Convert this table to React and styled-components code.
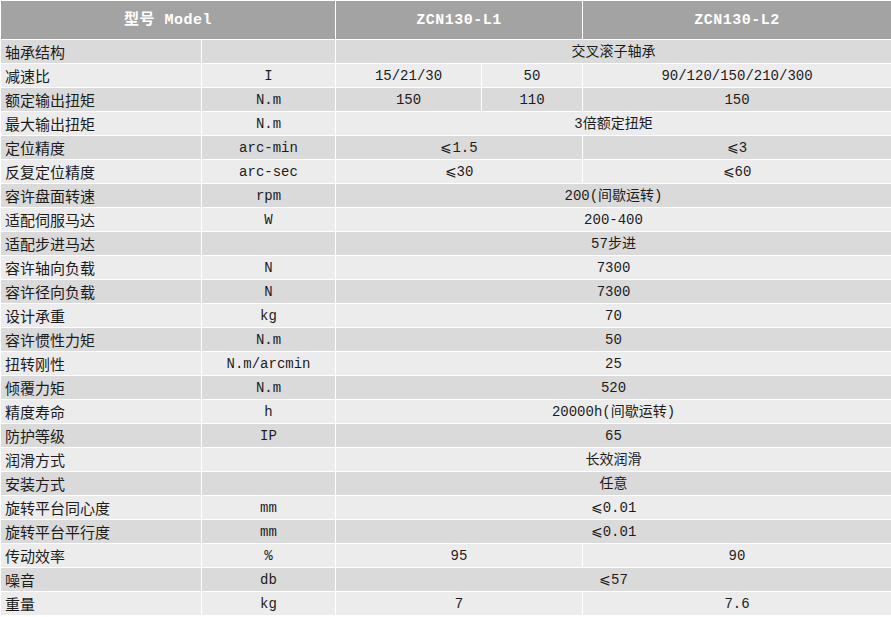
import React from 'react'
import styled, { createGlobalStyle } from 'styled-components'

const GlobalStyle = createGlobalStyle`
  html, body {
    margin: 0;
    padding: 0;
    background: #fff;
  }
`

const Sheet = styled.div`
  display: grid;
  grid-template-columns: 200px 133px 145px 100px 1fr;
  grid-template-rows: 38px repeat(24, 23px);
  gap: 1px;
  padding: 1px 0 1px 1px;
  width: 891px;
  box-sizing: border-box;
  background: #fff;
  font-family: 'Liberation Mono', 'Noto Sans CJK SC', monospace;
  font-size: 14px;
  color: #1c1c1c;
`

const tones = {
  head: '#a3a3a3',
  dark: '#dadada',
  light: '#ececec',
}

const Cell = styled.div`
  grid-column: span ${({ $span }) => $span || 1};
  background: ${({ $tone }) => tones[$tone]};
  display: flex;
  align-items: center;
  justify-content: ${({ $left }) => ($left ? 'flex-start' : 'center')};
  padding: ${({ $left }) => ($left ? '0 0 0 4px' : '0')};
  white-space: nowrap;
  line-height: 1;
`

const HeadCell = styled(Cell)`
  color: #fff;
  font-weight: bold;
  font-size: 15px;
  letter-spacing: 0.5px;
`

const Label = styled(Cell)`
  font-family: 'Noto Sans CJK SC', sans-serif;
  font-size: 15px;
`

const le = '\u2A7D'

// values: string = spans all three value columns
// [a, b] = a over col 3, b over col 4 ; [a, b, c] = one per column
const rows = [
  ['轴承结构', '', '交叉滚子轴承'],
  ['减速比', 'I', ['15/21/30', '50', '90/120/150/210/300']],
  ['额定输出扭矩', 'N.m', ['150', '110', '150']],
  ['最大输出扭矩', 'N.m', '3倍额定扭矩'],
  ['定位精度', 'arc-min', [le + '1.5', le + '3']],
  ['反复定位精度', 'arc-sec', [le + '30', le + '60']],
  ['容许盘面转速', 'rpm', '200(间歇运转)'],
  ['适配伺服马达', 'W', '200-400'],
  ['适配步进马达', '', '57步进'],
  ['容许轴向负载', 'N', '7300'],
  ['容许径向负载', 'N', '7300'],
  ['设计承重', 'kg', '70'],
  ['容许惯性力矩', 'N.m', '50'],
  ['扭转刚性', 'N.m/arcmin', '25'],
  ['倾覆力矩', 'N.m', '520'],
  ['精度寿命', 'h', '20000h(间歇运转)'],
  ['防护等级', 'IP', '65'],
  ['润滑方式', '', '长效润滑'],
  ['安装方式', '', '任意'],
  ['旋转平台同心度', 'mm', le + '0.01'],
  ['旋转平台平行度', 'mm', le + '0.01'],
  ['传动效率', '%', ['95', '90']],
  ['噪音', 'db', le + '57'],
  ['重量', 'kg', ['7', '7.6']],
]

const valueCells = (values, tone, key) => {
  if (typeof values === 'string') {
    return [<Cell key={key + 'v'} $span={3} $tone={tone}>{values}</Cell>]
  }
  if (values.length === 2) {
    return [
      <Cell key={key + 'a'} $span={2} $tone={tone}>{values[0]}</Cell>,
      <Cell key={key + 'b'} $tone={tone}>{values[1]}</Cell>,
    ]
  }
  return values.map((v, i) => (
    <Cell key={key + i} $tone={tone}>{v}</Cell>
  ))
}

export default function App() {
  return (
    <>
      <GlobalStyle />
      <Sheet>
        <HeadCell $span={2} $tone="head">型号 Model</HeadCell>
        <HeadCell $span={2} $tone="head">ZCN130-L1</HeadCell>
        <HeadCell $tone="head">ZCN130-L2</HeadCell>
        {rows.map(([label, unit, values], i) => {
          const tone = i % 2 === 0 ? 'dark' : 'light'
          return (
            <React.Fragment key={label + i}>
              <Label $left $tone={tone}>{label}</Label>
              <Cell $tone={tone}>{unit}</Cell>
              {valueCells(values, tone, 'r' + i)}
            </React.Fragment>
          )
        })}
      </Sheet>
    </>
  )
}
